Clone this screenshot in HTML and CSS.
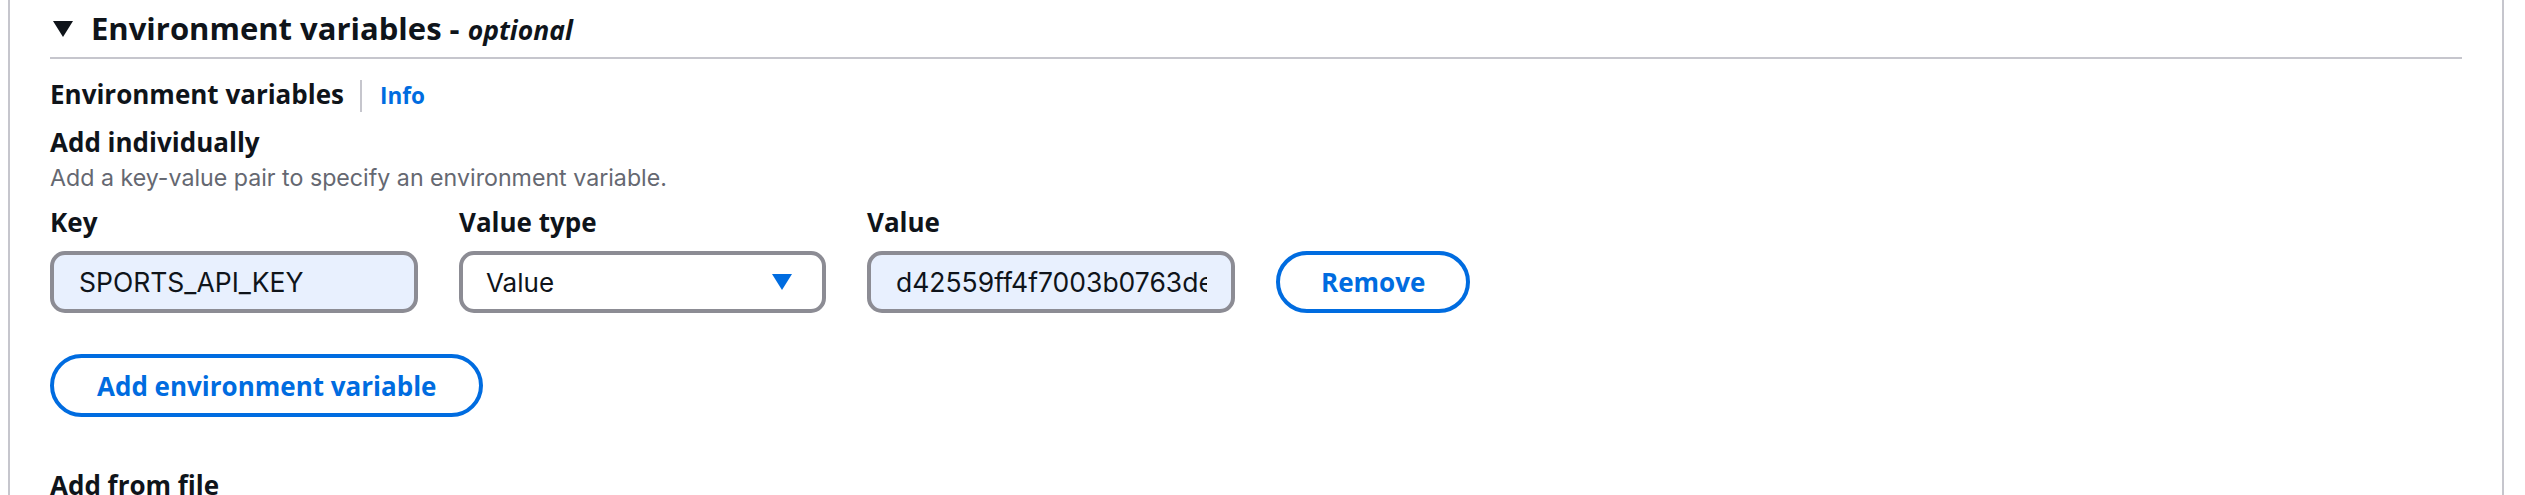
FILE: index.html
```html
<!DOCTYPE html>
<html lang="en">
<head>
<meta charset="utf-8">
<title>Environment variables</title>
<link rel="stylesheet" href="styles.css">
</head>
<body>
<div class="panel">
  <div class="section-header">
    <svg class="expand-caret" width="20" height="16" viewBox="0 0 20 16" aria-hidden="true"><polygon points="0,0 20,0 10,16" fill="#0f141a"/></svg>
    <h3 class="section-title">Environment variables - <i class="optional">optional</i></h3>
  </div>
  <div class="section-body">
    <div class="label-row">
      <span class="label">Environment variables</span>
      <span class="sep"></span>
      <a class="info" href="#">Info</a>
    </div>
    <div class="label sub-label">Add individually</div>
    <div class="desc">Add a key-value pair to specify an environment variable.</div>
    <div class="editor">
      <div class="field field-key">
        <div class="label">Key</div>
        <input class="text-input autofilled" type="text" value="SPORTS_API_KEY" readonly>
      </div>
      <div class="field field-type">
        <div class="label">Value type</div>
        <div class="select">
          <span>Value</span>
          <svg class="select-caret" width="20" height="16" viewBox="0 0 20 16" aria-hidden="true"><polygon points="0,0 20,0 10,16" fill="#006ce0"/></svg>
        </div>
      </div>
      <div class="field field-value">
        <div class="label">Value</div>
        <input class="text-input autofilled" type="text" value="d42559ff4f7003b0763de9a1c5f28b04" readonly>
      </div>
      <button class="btn btn-remove" type="button">Remove</button>
    </div>
    <button class="btn btn-add" type="button">Add environment variable</button>
    <div class="label file-label">Add from file</div>
  </div>
</div>
</body>
</html>
```
FILE: styles.css
```css
html, body {
  margin: 0;
  padding: 0;
  background: #ffffff;
}

body {
  font-family: Inter, "Open Sans", Arial, sans-serif;
  color: #0f141a;
  overflow: hidden;
}

.panel {
  box-sizing: border-box;
  margin-left: 8px;
  width: 2496px;
  min-height: 495px;
  border-left: 2px solid #c6c6cd;
  border-right: 2px solid #c6c6cd;
  padding: 0 40px;
}

.section-header {
  display: flex;
  align-items: flex-start;
  padding-top: 8px;
  height: 40px;
  padding-bottom: 9px;
  border-bottom: 2px solid #c6c6cd;
}

.expand-caret {
  flex: none;
  margin: 13px 18px 0 3px;
}

.section-title {
  margin: 0;
  font-family: "Open Sans", Arial, sans-serif;
  font-size: 31px;
  line-height: 40px;
  font-weight: 700;
  white-space: nowrap;
}

.optional {
  font-size: 26.5px;
  font-weight: 700;
  font-style: italic;
}

.section-body {
  padding-top: 17px;
}

.label-row {
  display: flex;
  align-items: baseline;
}

.label {
  font-family: "Open Sans", Arial, sans-serif;
  font-size: 26px;
  line-height: 36px;
  font-weight: 700;
}

.sep {
  align-self: flex-start;
  width: 2px;
  height: 32px;
  margin: 4px 18px 0 16px;
  background: #c6c6cd;
}

.info {
  font-family: "Open Sans", Arial, sans-serif;
  font-size: 22.5px;
  font-weight: 700;
  color: #006ce0;
  text-decoration: none;
}

.sub-label {
  margin-top: 12px;
}

.desc {
  margin-top: 3px;
  font-size: 23.2px;
  line-height: 30px;
  color: #656871;
}

.editor {
  margin-top: 11px;
  display: flex;
  align-items: flex-end;
  gap: 41px;
}

.field {
  display: flex;
  flex-direction: column;
  gap: 11px;
}

.field-key, .field-value {
  width: 368px;
}

.field-type {
  width: 367px;
}

.text-input {
  box-sizing: border-box;
  width: 100%;
  height: 62px;
  margin: 0;
  border: 4px solid #8c8c94;
  border-radius: 15px;
  padding: 0 24px 0 25px;
  font-family: inherit;
  font-size: 26.5px;
  color: #0f141a;
  outline: none;
}

.autofilled {
  background: #e8f0fe;
}

.select {
  box-sizing: border-box;
  height: 62px;
  border: 4px solid #8c8c94;
  border-radius: 15px;
  background: #ffffff;
  padding: 0 30px 0 23px;
  display: flex;
  align-items: center;
  justify-content: space-between;
  font-size: 26px;
}

.btn {
  box-sizing: border-box;
  height: 62px;
  margin: 0;
  padding: 0 41px;
  border: 4px solid #006ce0;
  border-radius: 32px;
  background: #ffffff;
  color: #006ce0;
  font-family: "Open Sans", Arial, sans-serif;
  font-size: 26px;
  font-weight: 700;
  white-space: nowrap;
  cursor: pointer;
}

.btn-add {
  display: block;
  margin-top: 41px;
  height: 63px;
  padding: 0 43px;
}

.file-label {
  margin-top: 50px;
}
```
